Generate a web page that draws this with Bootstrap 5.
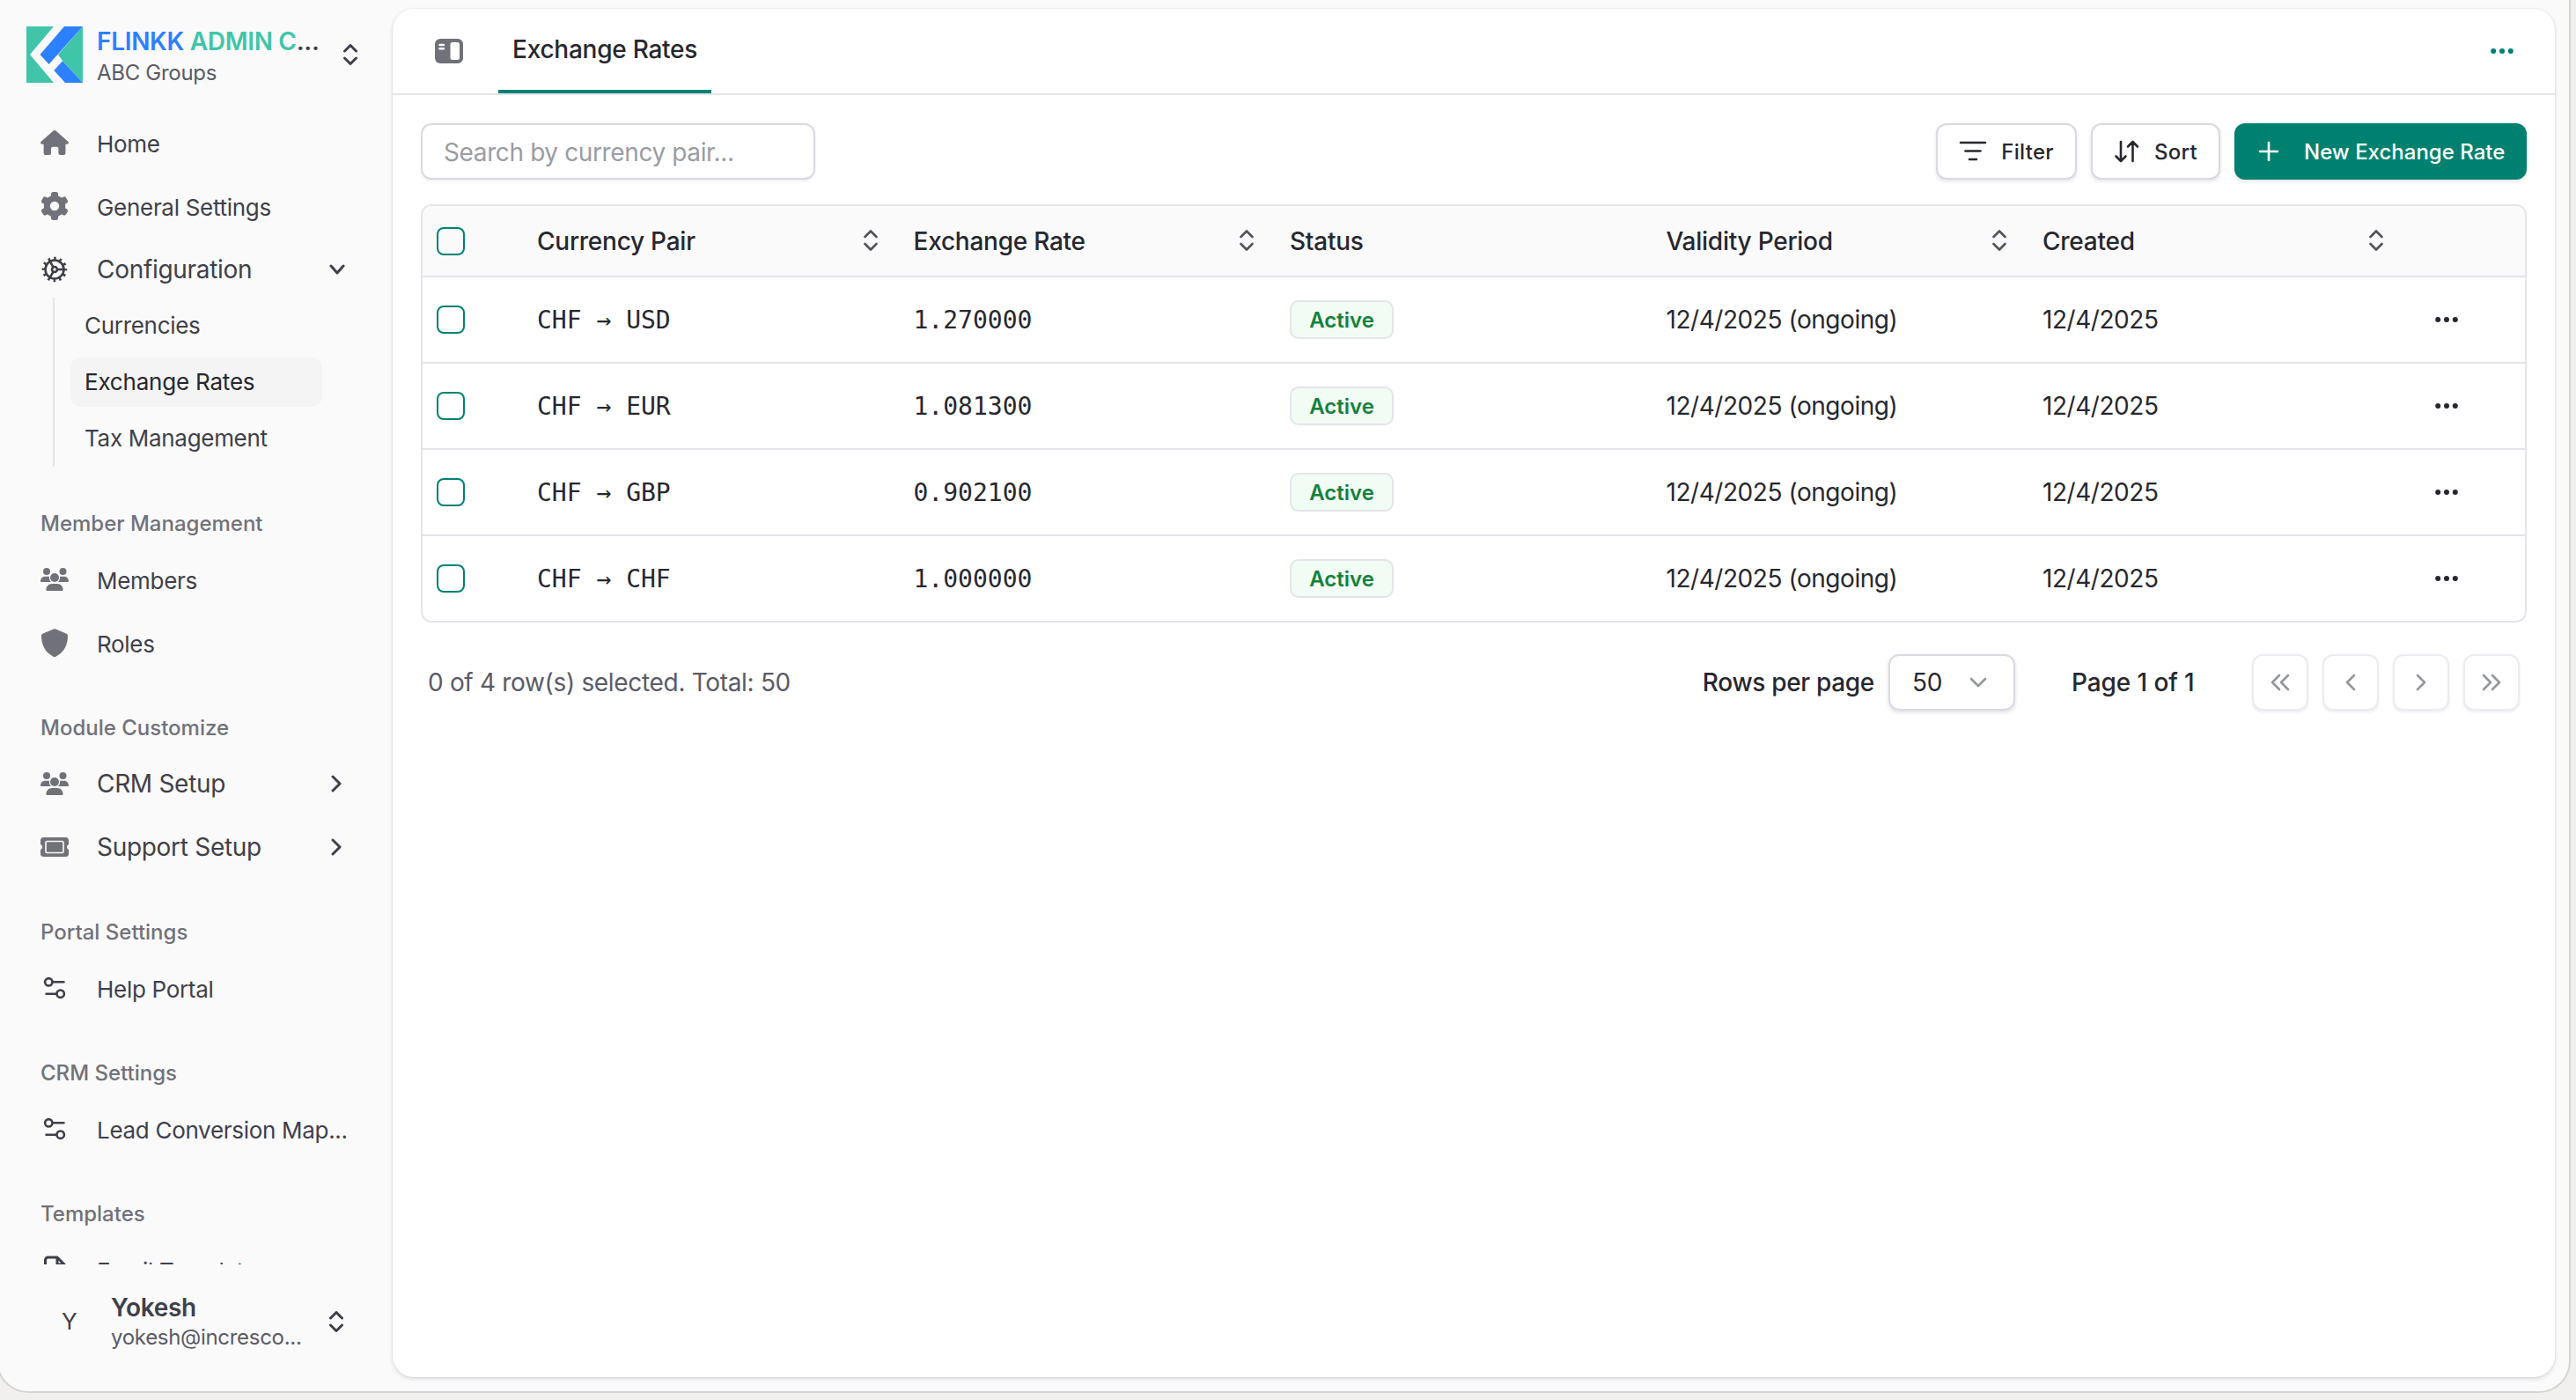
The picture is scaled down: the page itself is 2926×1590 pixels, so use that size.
<!DOCTYPE html>
<html lang="en">
<head>
  <meta charset="UTF-8">
  <meta name="viewport" content="width=device-width, initial-scale=1.0">
  <title>Exchange Rates</title>
  <link href="https://cdn.jsdelivr.net/npm/bootstrap@5.3.0/dist/css/bootstrap.min.css" rel="stylesheet">
  <style>
    body { background: #f1f0ef; font-family: Inter, "Liberation Sans", sans-serif; font-size: 28px; line-height: 1.3; color: #27272f; overflow: hidden; }
    svg { display: block; flex: none; }
    .line-icon { fill: none; stroke: currentColor; stroke-linecap: round; stroke-linejoin: round; }

    .app-frame { width: 2924px; height: 1582px; margin-left: -4px; padding-left: 2px; background: #fafafa; border: 2px solid #d5d5d1; border-top: 0; border-radius: 0 0 36px 36px; }

    /* sidebar */
    .side { width: 446px; height: 1580px; color: #3f3f4a; letter-spacing: -.3px; }
    .brand { height: 126px; padding: 2px 40px 0 30px; }
    .brand-text { margin-left: 16px; padding-top: 1px; }
    .brand-name { font-weight: 600; line-height: 36px; color: #3f3f4a; letter-spacing: -.3px; }
    .brand-blue { color: #2d80ff; }
    .brand-teal { color: #40c5a9; }
    .side-sub { font-size: 24px; line-height: 36px; color: #5a5a66; }
    .side-scroll { height: 1310px; overflow: hidden; }
    .side-item { height: 72px; padding: 0 54px 0 46px; gap: 32px; font-size: 26px; color: #3f3f4a; text-decoration: none; }
    .side-item span { padding-top: 3px; }
    .side-item.big { font-size: 28px; }
    .side-item.big span { padding-top: 1px; }
    .side-item .solid { color: #71717a; }
    .side-label { height: 55px; margin-top: 33px; padding-left: 46px; font-size: 24px; font-weight: 500; color: #71717a; letter-spacing: 0; }
    .side-tree { margin: -4px 80px 37px 60px; padding-left: 18px; border-left: 2px solid #e4e4ec; }
    .side-tree a { height: 56px; padding-left: 16px; font-size: 26px; color: #3f3f4a; text-decoration: none; border-radius: 12px; }
    .side-tree .cell { height: 64px; }
    .side-tree a.current { background: #f4f4f5; color: #27272f; letter-spacing: -.2px; }
    .side-user { height: 144px; padding: 0 56px 15px 70px; }
    .side-user .initial { width: 56px; font-size: 26px; }
    .side-user b { font-weight: 600; line-height: 35px; }
    .side-user .side-sub { line-height: 31px; letter-spacing: -.3px; }

    /* main panel */
    .panel { width: 2456px; height: 1554px; margin-top: 10px; background: #fff; border-radius: 24px; box-shadow: 0 0 0 1px rgba(24, 24, 60, .03), 0 2px 5px rgba(24, 24, 60, .14); }
    .panel-head { height: 98px; padding: 0 47px 0 48px; border-bottom: 2px solid #e4e4eb; }
    .tab-link { height: 96px; margin-left: 40px; padding: 1px 16px 0; border-bottom: 4px solid #008170; font-weight: 500; letter-spacing: -.25px; }
    .accent { color: #008170; }
    .panel-body { padding: 32px; }

    .search-box { width: 448px; height: 64px; padding: 2px 24px 0; border: 2px solid #d9d9e2; border-radius: 12px; font-size: 28px; letter-spacing: -.38px; box-shadow: 0 2px 3px rgba(24, 24, 60, .06); }
    .search-box::placeholder { color: #9a9ca3; opacity: 1; }
    .tool-btn { height: 64px; padding: 0 24px; border: 2px solid #d9d9e2; border-radius: 12px; background: #fff; color: #27272f; font-size: 24px; font-weight: 500; letter-spacing: .3px; box-shadow: 0 2px 4px rgba(24, 24, 60, .12); }
    .tool-btn span { padding-top: 2px; }
    .tool-btn.create { background: #008170; border-color: #008170; color: #fff; width: 332px; white-space: nowrap; letter-spacing: 0; }
    .tool-btn.create svg { margin-right: 27px; }

    .rates { margin-top: 28px; border: 2px solid #e4e4eb; border-radius: 12px; overflow: hidden; }
    .rates table { table-layout: fixed; border-collapse: separate; border-spacing: 0; width: 2388px; margin: 0; color: #27272f; }
    .rates th, .rates td { padding: 0 16px; vertical-align: middle; border: 0; background: transparent; color: inherit; }
    .rates th { height: 81px; font-weight: 500; letter-spacing: -.25px; border-bottom: 2px solid #e4e4eb; background: #fafafa; }
    .rates th span { padding-top: 2px; }
    .rates td { height: 98px; letter-spacing: -.45px; border-bottom: 2px solid #e4e4eb; }
    .rates tr:last-child td { height: 96px; border-bottom: 0; }
    .rates th .line-icon { color: #52525b; margin-right: 9px; }
    .rates .form-check-input { display: block; width: 32px; height: 32px; margin: 0; border: 2px solid #008170; border-radius: 8px; background-color: #fff; }
    .rates thead .form-check-input { background-color: #fafafa; }
    .rates td.mono { padding-top: 2px; font-family: "DejaVu Sans Mono", monospace; letter-spacing: 0; }
    .rates td.date-text { padding-top: 1px; }
    .state { display: inline-flex; width: 118px; height: 44px; padding-top: 1px; vertical-align: middle; border: 2px solid #e4e4eb; border-radius: 10px; background: #f1fcf4; color: #15803d; font-size: 24px; font-weight: 600; letter-spacing: 0; }
    .row-dots { margin-left: 18px; }

    .pager { margin: 36px 8px 0 8px; height: 64px; letter-spacing: -.32px; }
    .muted-text { color: #5a5a66; }
    .page-size { width: 144px; height: 64px; padding: 0 30px 0 25px; margin-left: 16px; border: 2px solid #d9d9e2; border-radius: 12px; box-shadow: 0 2px 4px rgba(24, 24, 60, .14); }
    .page-size svg { color: #93969d; }
    .page-btn { width: 64px; height: 64px; border: 2px solid #ebebf1; border-radius: 12px; background: #fff; color: #93969d; box-shadow: 0 2px 3px rgba(24, 24, 60, .08); }
    .page-count { width: 142px; margin: 0 63px 0 64px; white-space: nowrap; letter-spacing: -.1px; }
  </style>
</head>
<body>
  <!-- shared icons -->
  <svg width="0" height="0" class="position-absolute">
    <symbol id="updown" viewBox="0 0 16 24"><path d="M1.500 8 8 1.500 14.500 8M1.500 16 8 22.500 14.500 16"/></symbol>
    <symbol id="dots" viewBox="0 0 26 8"><circle cx="3.200" cy="4" r="3"/><circle cx="13" cy="4" r="3"/><circle cx="22.800" cy="4" r="3"/></symbol>
    <symbol id="right" viewBox="0 0 12 20"><path d="M2 2l8 8-8 8"/></symbol>
    <symbol id="left" viewBox="0 0 12 20"><path d="M10 2l-8 8 8 8"/></symbol>
    <symbol id="users" viewBox="0 0 32 32">
      <circle cx="7" cy="7" r="4"/><circle cx="25.500" cy="7" r="4"/><circle cx="16" cy="14" r="5"/>
      <path d="M0 18.200C0 15 2.300 12.800 5.300 12.800h3.400c.5 0 .9 0 1.300.2-.4 2.500.4 4.600 2.100 6H.8c-.5 0-.8-.3-.8-.8zM32 18.200c0-3.200-2.300-5.400-5.300-5.400h-3.400c-.5 0-.9 0-1.300.2.4 2.500-.4 4.600-2.100 6h11.300c.5 0 .8-.3.8-.8zM6.400 27.700c0-3.800 3-6.700 6.600-6.700h6c3.700 0 6.600 2.900 6.600 6.700 0 .7-.6 1.300-1.300 1.300H7.700c-.7 0-1.300-.6-1.300-1.300z"/>
    </symbol>
    <symbol id="sliders" viewBox="0 0 32 32"><circle cx="9.300" cy="9.300" r="4.200"/><path d="M14 9.300h12.500M6.500 22.700H18"/><circle cx="22.700" cy="22.700" r="4.200"/></symbol>
  </svg>

  <div class="app-frame d-flex">
    <aside class="side d-flex flex-column flex-shrink-0">
      <div class="brand d-flex align-items-center">
        <svg class="mb-1" width="64" height="64" viewBox="0 0 64 64">
          <path fill="#40c5a9" d="M0 0h31L4 32l27 32H0zM64 0v64L41 39l-5-7z"/>
          <path fill="#2d80ff" d="M43 0h21L25.500 43l-10-11zM41 39.300 64 64H44L31.300 50z"/>
        </svg>
        <div class="brand-text flex-grow-1 text-nowrap">
          <div class="brand-name"><span class="brand-blue">FLINKK</span> <span class="brand-teal">ADMIN C</span>...</div>
          <div class="side-sub">ABC Groups</div>
        </div>
        <svg class="line-icon mb-1" width="16" height="24" stroke-width="3"><use href="#updown"/></svg>
      </div>

      <nav class="side-scroll">
        <a class="side-item d-flex align-items-center" href="#">
          <svg class="solid" width="32" height="32" fill="currentColor"><path d="M14.600 2.600a2 2 0 0 1 2.800 0L31.300 14.700c1.200 1.100.6 3.100-1.100 3.100H28.400V27.400a2.600 2.600 0 0 1-2.600 2.600H22.600a2.200 2.200 0 0 1-2.200-2.200V23a2.200 2.200 0 0 0-2.200-2.200h-4A2.200 2.200 0 0 0 12 23v4.800A2.200 2.200 0 0 1 9.800 30H6.200a2.600 2.600 0 0 1-2.600-2.600V17.800H1.800c-1.700 0-2.300-2-1.100-3.100z"/></svg>
          <span>Home</span>
        </a>
        <a class="side-item d-flex align-items-center" href="#">
          <svg class="solid" width="32" height="32">
            <g fill="currentColor"><rect x="12" width="8" height="32" rx="2.500"/><rect x="12" width="8" height="32" rx="2.500" transform="rotate(60 16 16)"/><rect x="12" width="8" height="32" rx="2.500" transform="rotate(120 16 16)"/></g>
            <circle cx="16" cy="16" r="8.700" fill="#fafafa" stroke="currentColor" stroke-width="7"/>
          </svg>
          <span>General Settings</span>
        </a>
        <a class="side-item big d-flex align-items-center" href="#">
          <svg class="line-icon" width="32" height="32" stroke-width="2.600">
            <circle cx="16" cy="16" r="10.500"/><circle cx="16" cy="16" r="3"/>
            <path d="M19 16h8M14.500 13.400l-4-7M14.500 18.600l-4 7"/>
            <circle cx="16" cy="16" r="12.700" stroke-linecap="butt" stroke-dasharray="2.600 4.050" stroke-dashoffset="1.300" stroke-width="3.200"/>
          </svg>
          <span class="flex-grow-1">Configuration</span>
          <svg class="line-icon" width="18" height="12" stroke-width="3"><path d="M2 2l7 8 7-8"/></svg>
        </a>
        <div class="side-tree">
          <div class="cell pt-1"><a class="d-flex align-items-center" href="#">Currencies</a></div>
          <div class="cell pt-1"><a class="d-flex align-items-center current" href="#">Exchange Rates</a></div>
          <div class="cell pt-1"><a class="d-flex align-items-center" href="#">Tax Management</a></div>
        </div>

        <div class="side-label d-flex align-items-center">Member Management</div>
        <a class="side-item d-flex align-items-center" href="#">
          <svg class="solid" width="32" height="32" fill="currentColor"><use href="#users"/></svg>
          <span>Members</span>
        </a>
        <a class="side-item d-flex align-items-center" href="#">
          <svg class="solid" width="32" height="32" fill="currentColor"><path d="M14.800.4a3 3 0 0 1 2.400 0l11.900 5c1.200.5 1.900 1.500 1.900 2.700C31 17 27.500 27 17.300 31.700a3 3 0 0 1-2.600 0C4.500 27 1 17 1 8.100c0-1.200.7-2.200 1.900-2.700z"/></svg>
          <span>Roles</span>
        </a>

        <div class="side-label d-flex align-items-center">Module Customize</div>
        <a class="side-item big d-flex align-items-center" href="#">
          <svg class="solid" width="32" height="32" fill="currentColor"><use href="#users"/></svg>
          <span class="flex-grow-1">CRM Setup</span>
          <svg class="line-icon me-1" width="12" height="20" stroke-width="3"><use href="#right"/></svg>
        </a>
        <a class="side-item big d-flex align-items-center" href="#">
          <svg class="solid" width="32" height="32">
            <path fill="currentColor" d="M3.500 5h25A3.500 3.500 0 0 1 32 8.500V13a3.200 3.200 0 0 0 0 6v4.500a3.500 3.500 0 0 1-3.500 3.500h-25A3.500 3.500 0 0 1 0 23.500V19a3.200 3.200 0 0 0 0-6V8.500A3.500 3.500 0 0 1 3.500 5z"/>
            <rect x="6" y="9.500" width="20" height="13" rx="1.500" fill="none" stroke="#fafafa" stroke-width="1.600"/>
          </svg>
          <span class="flex-grow-1">Support Setup</span>
          <svg class="line-icon me-1" width="12" height="20" stroke-width="3"><use href="#right"/></svg>
        </a>

        <div class="side-label d-flex align-items-center">Portal Settings</div>
        <a class="side-item d-flex align-items-center" href="#">
          <svg class="line-icon" width="32" height="32" stroke-width="2.600"><use href="#sliders"/></svg>
          <span>Help Portal</span>
        </a>

        <div class="side-label d-flex align-items-center">CRM Settings</div>
        <a class="side-item d-flex align-items-center text-nowrap" href="#">
          <svg class="line-icon" width="32" height="32" stroke-width="2.600"><use href="#sliders"/></svg>
          <span>Lead Conversion Map...</span>
        </a>

        <div class="side-label d-flex align-items-center">Templates</div>
        <a class="side-item d-flex align-items-center" href="#">
          <svg class="line-icon" width="32" height="32" stroke-width="3"><path d="M5.500 29V5a3 3 0 0 1 3-3H19l8 8v19zM19 2v8h8"/></svg>
          <span>Email Templates</span>
        </a>
      </nav>

      <div class="side-user d-flex align-items-center">
        <div class="initial">Y</div>
        <div class="flex-grow-1 text-nowrap">
          <b class="d-block">Yokesh</b>
          <div class="side-sub">yokesh@incresco...</div>
        </div>
        <svg class="line-icon" width="16" height="24" stroke-width="3"><use href="#updown"/></svg>
      </div>
    </aside>

    <main class="panel">
      <header class="panel-head d-flex align-items-center">
        <svg width="32" height="28" viewBox="0 0 32 28">
          <rect width="32" height="28" rx="6" fill="#71717a"/>
          <rect x="17.500" y="4" width="10.500" height="20" rx="2.500" fill="#fff"/>
          <path d="M5.500 7h4.500M5.500 11.300h4.500" stroke="#fff" stroke-width="2.400" stroke-linecap="round"/>
        </svg>
        <div class="tab-link d-flex align-items-center">Exchange Rates</div>
        <svg class="accent ms-auto" width="26" height="8" fill="currentColor"><use href="#dots"/></svg>
      </header>

      <div class="panel-body">
        <div class="d-flex align-items-center">
          <input class="search-box form-control" type="text" placeholder="Search by currency pair...">
          <div class="d-flex gap-3 ms-auto">
            <button class="tool-btn d-flex align-items-center">
              <svg class="line-icon me-3" width="32" height="24" stroke-width="2.600"><path d="M2 2h28M7.500 11.500h17M12 21h8"/></svg>
              <span>Filter</span>
            </button>
            <button class="tool-btn d-flex align-items-center">
              <svg class="line-icon me-3" width="30" height="26" stroke-width="2.600"><path d="M8 2v22M2.500 18.500 8 24l5.500-5.500M21.500 24V2M16 7.500 21.500 2 27 7.500"/></svg>
              <span>Sort</span>
            </button>
            <button class="tool-btn create d-flex align-items-center">
              <svg class="line-icon" width="26" height="24" stroke-width="2.600"><path d="M13 2v20M3 12h20"/></svg>
              <span>New Exchange Rate</span>
            </button>
          </div>
        </div>

        <div class="rates">
          <table class="table">
            <colgroup><col style="width:114px"><col style="width:427.500px"><col style="width:427.500px"><col style="width:427.500px"><col style="width:427.500px"><col style="width:427.500px"><col></colgroup>
            <thead>
              <tr>
                <th><input class="form-check-input" type="checkbox"></th>
                <th><div class="d-flex align-items-center justify-content-between"><span>Currency Pair</span><svg class="line-icon" width="16" height="24" stroke-width="2.600"><use href="#updown"/></svg></div></th>
                <th><div class="d-flex align-items-center justify-content-between"><span>Exchange Rate</span><svg class="line-icon" width="16" height="24" stroke-width="2.600"><use href="#updown"/></svg></div></th>
                <th><div class="d-flex"><span>Status</span></div></th>
                <th><div class="d-flex align-items-center justify-content-between"><span>Validity Period</span><svg class="line-icon" width="16" height="24" stroke-width="2.600"><use href="#updown"/></svg></div></th>
                <th><div class="d-flex align-items-center justify-content-between"><span>Created</span><svg class="line-icon" width="16" height="24" stroke-width="2.600"><use href="#updown"/></svg></div></th>
                <th></th>
              </tr>
            </thead>
            <tbody id="rateRows"></tbody>
          </table>
        </div>

        <div class="pager d-flex align-items-center">
          <span class="muted-text me-auto">0 of 4 row(s) selected. Total: 50</span>
          <span class="fw-medium">Rows per page</span>
          <div class="page-size d-flex align-items-center justify-content-between">
            50
            <svg class="line-icon" width="20" height="12" stroke-width="2.600"><path d="M2 2l8 8 8-8"/></svg>
          </div>
          <span class="page-count fw-medium">Page 1 of 1</span>
          <div class="d-flex gap-3">
            <button class="page-btn d-flex align-items-center justify-content-center p-0"><svg class="line-icon" width="22" height="20" stroke-width="2.600"><path d="M10 2l-8 8 8 8M20 2l-8 8 8 8"/></svg></button>
            <button class="page-btn d-flex align-items-center justify-content-center p-0"><svg class="line-icon" width="12" height="20" stroke-width="2.600"><use href="#left"/></svg></button>
            <button class="page-btn d-flex align-items-center justify-content-center p-0"><svg class="line-icon" width="12" height="20" stroke-width="2.600"><use href="#right"/></svg></button>
            <button class="page-btn d-flex align-items-center justify-content-center p-0"><svg class="line-icon" width="22" height="20" stroke-width="2.600"><path d="M2 2l8 8-8 8M12 2l8 8-8 8"/></svg></button>
          </div>
        </div>
      </div>
    </main>
  </div>

  <script src="https://cdn.jsdelivr.net/npm/bootstrap@5.3.0/dist/js/bootstrap.bundle.min.js"></script>
  <script>
    const rates = [
      { pair: 'CHF → USD', rate: '1.270000' },
      { pair: 'CHF → EUR', rate: '1.081300' },
      { pair: 'CHF → GBP', rate: '0.902100' },
      { pair: 'CHF → CHF', rate: '1.000000' }
    ];

    document.getElementById('rateRows').innerHTML = rates.map(r => `
      <tr>
        <td><input class="form-check-input" type="checkbox"></td>
        <td class="mono">${r.pair}</td>
        <td class="mono">${r.rate}</td>
        <td><span class="state align-items-center justify-content-center">Active</span></td>
        <td class="date-text">12/4/2025 (ongoing)</td>
        <td class="date-text">12/4/2025</td>
        <td><svg class="row-dots" width="26" height="8" fill="currentColor"><use href="#dots"/></svg></td>
      </tr>`).join('');
  </script>
</body>
</html>
